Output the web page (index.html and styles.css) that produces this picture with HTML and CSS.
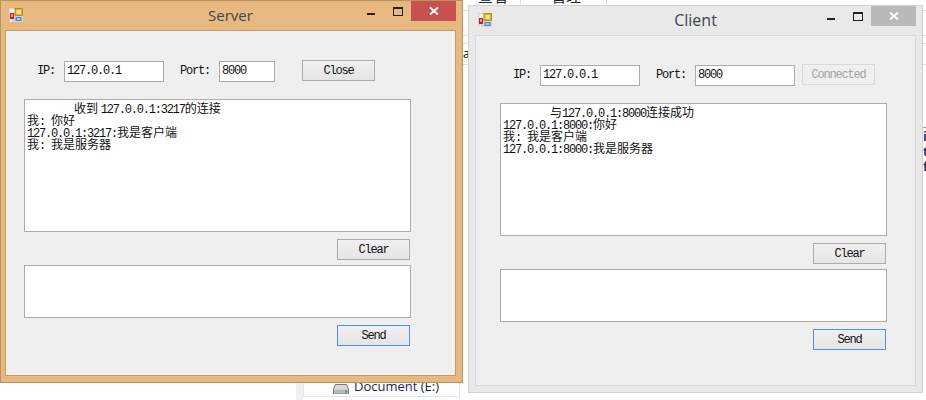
FILE: index.html
```html
<!DOCTYPE html>
<html lang="zh">
<head>
<meta charset="utf-8">
<title>Server and Client</title>
<link rel="stylesheet" href="styles.css">
</head>
<body>
<div class="desk">
  <div class="frag frag-top1">查看</div>
  <div class="frag frag-top2">管理</div>
  <div class="vline vline-a"></div>
  <div class="vline vline-b"></div>
  <div class="hline hl-1"></div><div class="hline hl-2"></div><div class="hline hl-3"></div><div class="hline hl-4"></div>
  <div class="rline rl-1"></div><div class="rline rl-2"></div><div class="rline rl-3"></div><div class="rline rl-4"></div><div class="rline rl-5"></div>
  <div class="frag frag-a">a</div>
  <div class="frag frag-r">i<br>t<br>f</div>
  <div class="side"></div>
  <div class="drive-row">
    <svg class="drive" width="16" height="12" viewBox="0 0 16 12"><path d="M2.5 1.5h11L15.5 6v4.5h-15V6z" fill="#dcdcdc" stroke="#777"/><path d="M1 6.5h14v4H1z" fill="#b9bcbf"/><rect x="12" y="7.5" width="2" height="2" fill="#3aa53a"/></svg>
    <span class="drive-name">Document (E:)</span>
  </div>

  <section class="win win-server">
    <header class="titlebar">
      <svg class="appicon" width="14" height="14" viewBox="0 0 14 14"><rect width="14" height="14" fill="#d4d4d4"/><rect x="1" y="1" width="5" height="4" fill="#eee"/><rect x="6" y="0.5" width="7.5" height="7" fill="#e2b21c" stroke="#a9851a" stroke-width=".8"/><rect x="7.5" y="2" width="4.5" height="4" fill="#fbe07a"/><rect x="1" y="5" width="4" height="6" fill="#c4201c"/><rect x="2" y="6" width="2" height="3" fill="#ee8f80"/><rect x="6.5" y="9" width="6" height="4" fill="#4a86de"/><rect x="8" y="10" width="3" height="2" fill="#a8ccf4"/><rect x="1" y="12" width="2" height="2" fill="#eee"/></svg>
      <h1 class="title">Server</h1>
      <div class="controls">
        <span class="min"></span><span class="max"></span>
        <span class="close"><svg width="10" height="8" viewBox="0 0 10 8"><path d="M1 .5l8 7M9 .5l-8 7" stroke="#fff" stroke-width="2" fill="none"/></svg></span>
      </div>
    </header>
    <div class="area">
      <div class="row">
        <label class="lbl lbl-ip">IP:</label><input class="field field-ip" value="127.0.0.1">
        <label class="lbl lbl-port">Port:</label><input class="field field-port" value="8000">
        <button class="btn btn-top">Close</button>
      </div>
      <div class="box box-log">
        <div class="line first">收到 <span class="lat">127.0.0.1:3217</span>的连接</div>
        <div class="line">我<span class="lat">: </span>你好</div>
        <div class="line"><span class="lat">127.0.0.1:3217:</span>我是客户端</div>
        <div class="line">我<span class="lat">: </span>我是服务器</div>
      </div>
      <div class="act"><button class="btn">Clear</button></div>
      <div class="box box-send"></div>
      <div class="act act-send"><button class="btn btn-focus">Send</button></div>
    </div>
  </section>

  <section class="win win-client">
    <header class="titlebar">
      <svg class="appicon" width="14" height="14" viewBox="0 0 14 14"><rect width="14" height="14" fill="#d4d4d4"/><rect x="1" y="1" width="5" height="4" fill="#eee"/><rect x="6" y="0.5" width="7.5" height="7" fill="#e2b21c" stroke="#a9851a" stroke-width=".8"/><rect x="7.5" y="2" width="4.5" height="4" fill="#fbe07a"/><rect x="1" y="5" width="4" height="6" fill="#c4201c"/><rect x="2" y="6" width="2" height="3" fill="#ee8f80"/><rect x="6.5" y="9" width="6" height="4" fill="#4a86de"/><rect x="8" y="10" width="3" height="2" fill="#a8ccf4"/><rect x="1" y="12" width="2" height="2" fill="#eee"/></svg>
      <h1 class="title">Client</h1>
      <div class="controls">
        <span class="min"></span><span class="max"></span>
        <span class="close"><svg width="10" height="8" viewBox="0 0 10 8"><path d="M1 .5l8 7M9 .5l-8 7" stroke="#fff" stroke-width="2" fill="none"/></svg></span>
      </div>
    </header>
    <div class="area">
      <div class="row">
        <label class="lbl lbl-ip">IP:</label><input class="field field-ip" value="127.0.0.1">
        <label class="lbl lbl-port">Port:</label><input class="field field-port" value="8000">
        <button class="btn btn-top btn-off" disabled>Connected</button>
      </div>
      <div class="box box-log">
        <div class="line first">与<span class="lat">127.0.0.1:8000</span>连接成功</div>
        <div class="line"><span class="lat">127.0.0.1:8000:</span>你好</div>
        <div class="line">我<span class="lat">: </span>我是客户端</div>
        <div class="line"><span class="lat">127.0.0.1:8000:</span>我是服务器</div>
      </div>
      <div class="act"><button class="btn">Clear</button></div>
      <div class="box box-send"></div>
      <div class="act act-send"><button class="btn btn-focus">Send</button></div>
    </div>
  </section>
</div>
</body>
</html>
```
FILE: styles.css
```css
* { box-sizing: border-box; }
html, body { margin: 0; padding: 0; }
body { background: #fff; overflow: hidden; }
.desk { position: relative; width: 926px; height: 400px; overflow: hidden; background: #fff; }

/* desktop fragments behind the windows */
.frag { position: absolute; font-family: "Noto Sans CJK SC", "Noto Sans", sans-serif; color: #222; }
.frag-top1 { left: 478px; top: -12px; font-size: 15px; line-height: 16px; }
.frag-top2 { left: 551px; top: -12px; font-size: 15px; line-height: 16px; }
.frag-a { left: 463px; top: 46px; font-size: 12px; line-height: 16px; font-family: "Noto Sans", sans-serif; }
.frag-r { left: 923px; top: 129px; font-size: 13px; line-height: 15px; font-family: "Noto Sans", sans-serif; font-weight: 600; color: #1a2a7a; }
.vline { position: absolute; top: 0; width: 1px; height: 4px; background: #dcdcdc; }
.vline-a { left: 520px; }
.vline-b { left: 606px; }
.hline { position: absolute; left: 463px; width: 5px; height: 1px; background: #dedede; }
.rline { position: absolute; left: 923px; width: 3px; height: 1px; background: #dedede; }
.hl-1, .rl-1 { top: 10px; }
.hl-2, .rl-2 { top: 35px; }
.hl-3, .rl-3 { top: 43px; }
.hl-4, .rl-4 { top: 64px; }
.rl-5 { top: 127px; background: #a0a0a0; }
.side { position: absolute; left: 296px; top: 370px; width: 7px; height: 30px; background: #f0f0f0; }
.drive-row { position: absolute; left: 303px; top: 370px; width: 157px; height: 27px; border: 1px solid #e4e4e4; border-top: 0; display: flex; align-items: flex-start; padding: 8px 0 0 29px; gap: 5px; }
.drive { margin-top: 5px; }
.drive-name { font: 13px/16px "Open Sans", "Noto Sans", sans-serif; color: #1c2750; }

/* windows */
.win { position: absolute; display: flex; flex-direction: column; border: 1px solid; padding: 0 6px 6px; }
.win-server { left: 0; top: 0; width: 463px; height: 383px; background: #e7b87f; border-color: #b9935f; padding-left: 4px; --area-border: #c49a66; --close: #c75050; --pad-top: 29px; --pad-left: 18px; --port-w: 56px; --btn-gap: 27px; }
.win-client { left: 468px; top: 5px; width: 455px; height: 388px; background: #e9e9e9; border-color: #d2d2d2; --area-border: #d9d9d9; --close: #b9b9b9; --pad-top: 28px; --pad-left: 24px; --port-w: 100px; --btn-gap: 7px; }

.titlebar { height: 29px; flex: none; display: grid; grid-template-columns: 1fr auto 1fr; align-items: start; }
.appicon { margin: 7px 0 0 4px; }
.win-client .appicon { margin-left: 3px; }
.title { margin: 4px 0 0; font: 400 15px/20px "Open Sans", "Noto Sans", sans-serif; color: #3a4a52; }
.win-client .title { font-size: 16px; }
.controls { justify-self: end; display: flex; align-items: flex-start; }
.min { width: 8px; height: 2px; background: #222; margin-top: 12px; }
.max { width: 10px; height: 9px; border: 1px solid #222; border-top-width: 2px; margin: 6px 8px 0 18px; }
.close { width: 45px; height: 20px; background: var(--close); display: flex; align-items: center; justify-content: center; }

.area { flex: 1; background: #efefef; border: 1px solid var(--area-border); padding: var(--pad-top) 0 0 var(--pad-left); }
.row { display: flex; align-items: flex-start; height: 22px; padding-left: 13px; }
.lbl { font: 12px/21px "Liberation Mono", monospace; letter-spacing: -1.2px; color: #111; margin-top: 1px; }
.lbl-ip { width: 27px; }
.lbl-port { width: 39px; margin-left: 16px; }
.field { height: 21px; margin: 1px 0 0; border: 1px solid #acacac; background: #fff; padding: 0 2px 1px; font: 12px "Liberation Mono", monospace; letter-spacing: -1.2px; color: #111; border-radius: 0; outline: 0; }
.field-ip { width: 100px; }
.field-port { width: var(--port-w); }

.btn { display: block; width: 73px; height: 21px; padding: 1px 0 0; border: 1px solid #acacac; border-radius: 0; background: linear-gradient(#f0f0f0, #e5e5e5); font: 12px/18px "Liberation Mono", monospace; letter-spacing: -1.2px; color: #111; }
.btn-top { margin-left: var(--btn-gap); }
.btn-focus { border-color: #4a94e4; }
.btn-off { background: #efefef; border-color: #d9d9d9; color: #a3a3a3; }

.box { width: 387px; background: #fff; border: 1px solid #acacac; }
.box-log { height: 133px; margin-top: 17px; padding: 2px 2px; font: 12px/12px "Noto Sans CJK SC", sans-serif; color: #111; }
.box-send { height: 53px; margin-top: 5px; }
.line { height: 12px; white-space: pre; }
.first { text-indent: 47px; }
.lat { font: 12px/12px "Liberation Mono", monospace; letter-spacing: -1.2px; }
.act { width: 386px; margin-top: 7px; display: flex; justify-content: flex-end; }
```
